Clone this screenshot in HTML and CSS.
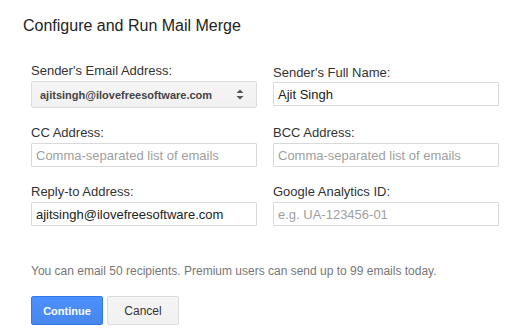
FILE: index.html
```html
<!DOCTYPE html>
<html>
<head>
<meta charset="utf-8">
<link rel="stylesheet" href="styles.css">
</head>
<body>
<div class="dialog">
  <h1 class="title">Configure and Run Mail Merge</h1>
  <div class="form">
    <div class="field">
      <label class="label">Sender's Email Address:</label>
      <div class="select">
        <span class="select-text">ajitsingh@ilovefreesoftware.com</span>
        <svg class="arrows" width="8" height="11" viewBox="0 0 8 11"><path d="M0.5 4 L4 0.5 L7.5 4 Z M0.5 7 L4 10.5 L7.5 7 Z" fill="#555"/></svg>
      </div>
    </div>
    <div class="field field-right">
      <label class="label">Sender's Full Name:</label>
      <input class="input" type="text" value="Ajit Singh">
    </div>
    <div class="field">
      <label class="label">CC Address:</label>
      <input class="input" type="text" placeholder="Comma-separated list of emails">
    </div>
    <div class="field">
      <label class="label">BCC Address:</label>
      <input class="input" type="text" placeholder="Comma-separated list of emails">
    </div>
    <div class="field">
      <label class="label">Reply-to Address:</label>
      <input class="input" type="text" value="ajitsingh@ilovefreesoftware.com">
    </div>
    <div class="field">
      <label class="label">Google Analytics ID:</label>
      <input class="input" type="text" placeholder="e.g. UA-123456-01">
    </div>
  </div>
  <p class="note">You can email 50 recipients. Premium users can send up to 99 emails today.</p>
  <div class="buttons">
    <button class="btn btn-primary">Continue</button>
    <button class="btn btn-default">Cancel</button>
  </div>
</div>
</body>
</html>
```

FILE: styles.css
```css
html, body {
  margin: 0;
  padding: 0;
  background: #fff;
}
body {
  font-family: "Liberation Sans", Arial, sans-serif;
  color: #333;
}
.dialog {
  padding: 17px 0 0 0;
}
.title {
  margin: 0;
  padding-left: 23px;
  font-size: 16px;
  line-height: 18px;
  font-weight: normal;
  color: #222;
}
.form {
  margin-top: 28px;
  padding-left: 31px;
  display: grid;
  grid-template-columns: 226px 226px;
  column-gap: 16px;
  row-gap: 17px;
}
.field {
  display: flex;
  flex-direction: column;
}
.field-right {
  padding-top: 2px;
}
.label {
  font-size: 13px;
  line-height: 15px;
  color: #333;
  margin-bottom: 3px;
}
.field-right .label {
  margin-bottom: 2px;
}
.select {
  box-sizing: border-box;
  height: 27px;
  border: 1px solid #dcdcdc;
  border-radius: 2px;
  background: linear-gradient(#f5f5f5, #f1f1f1);
  display: flex;
  align-items: center;
  justify-content: space-between;
  padding: 0 12px 0 8px;
}
.select-text {
  font-size: 11px;
  font-weight: bold;
  color: #444;
}
.arrows {
  display: block;
}
.input {
  box-sizing: border-box;
  height: 24px;
  width: 100%;
  margin: 0;
  border: 1px solid #d9d9d9;
  border-radius: 1px;
  padding: 0 4px;
  font-family: "Liberation Sans", Arial, sans-serif;
  font-size: 13px;
  color: #222;
  outline: none;
  background: #fff;
}
.input::placeholder {
  color: #a0a0a0;
}
.note {
  margin: 38px 0 0 31px;
  font-size: 12px;
  line-height: 14px;
  color: #777;
}
.buttons {
  margin: 18px 0 0 31px;
  display: flex;
  gap: 4px;
}
.btn {
  box-sizing: border-box;
  width: 72px;
  height: 29px;
  border-radius: 2px;
  font-family: "Liberation Sans", Arial, sans-serif;
  font-size: 11px;
  font-weight: bold;
  padding: 0;
  cursor: default;
}
.btn-primary {
  background: linear-gradient(#4d90fe, #4787ed);
  border: 1px solid #3079ed;
  color: #fff;
}
.btn-default {
  background: linear-gradient(#f5f5f5, #f1f1f1);
  border: 1px solid #dcdcdc;
  color: #333;
  font-size: 12px;
  font-weight: normal;
}
```
